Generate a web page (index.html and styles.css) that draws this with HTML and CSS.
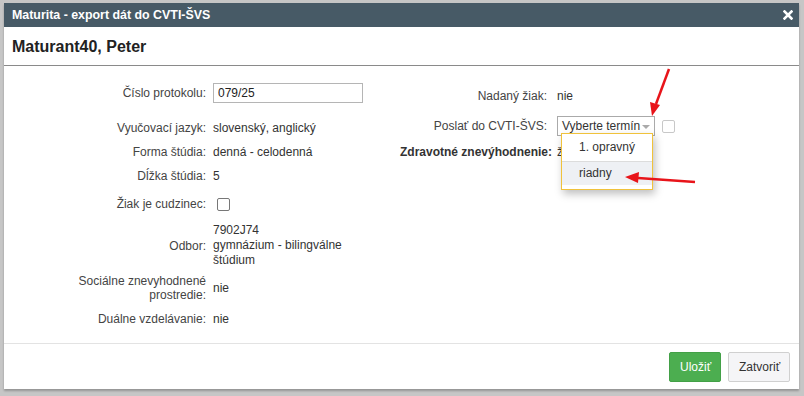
FILE: index.html
```html
<!DOCTYPE html>
<html lang="sk">
<head>
    <meta charset="UTF-8">
    <title>Maturita - export dát do CVTI-ŠVS</title>
    <link rel="stylesheet" href="styles.css">
</head>
<body>
    <div class="dialog">
        <div class="titlebar">
            <span class="title">Maturita - export dát do CVTI-ŠVS</span>
            <svg class="close" width="10" height="10" viewBox="0 0 10 10">
                <path d="M1.5 1.5 L8.5 8.5 M8.5 1.5 L1.5 8.5" stroke="#fff" stroke-width="2.6" stroke-linecap="square"/>
            </svg>
        </div>
        <div class="header">
            <h1>Maturant40, Peter</h1>
        </div>

        <div class="content">
            <div class="col col-left">
                <div class="row row-protocol">
                    <label>Číslo protokolu:</label>
                    <div class="value"><input type="text" class="text-input" value="079/25"></div>
                </div>
                <div class="row row-lang">
                    <label>Vyučovací jazyk:</label>
                    <div class="value">slovenský, anglický</div>
                </div>
                <div class="row row-form">
                    <label>Forma štúdia:</label>
                    <div class="value">denná - celodenná</div>
                </div>
                <div class="row row-length">
                    <label>Dĺžka štúdia:</label>
                    <div class="value">5</div>
                </div>
                <div class="row row-foreign">
                    <label>Žiak je cudzinec:</label>
                    <div class="value"><span class="checkbox"></span></div>
                </div>
                <div class="row row-field">
                    <label>Odbor:</label>
                    <div class="value multi">7902J74<br>gymnázium - bilingválne<br>štúdium</div>
                </div>
                <div class="row row-social">
                    <label>Sociálne znevyhodnené<br>prostredie:</label>
                    <div class="value">nie</div>
                </div>
                <div class="row row-dual">
                    <label>Duálne vzdelávanie:</label>
                    <div class="value">nie</div>
                </div>
            </div>

            <div class="col col-right">
                <div class="row row-gifted">
                    <label>Nadaný žiak:</label>
                    <div class="value">nie</div>
                </div>
                <div class="row row-send">
                    <label>Poslať do CVTI-ŠVS:</label>
                    <div class="value send-value">
                        <div class="select-wrap">
                            <div class="select">Vyberte termín<span class="caret"></span></div>
                            <ul class="dropdown">
                                <li>1. opravný</li>
                                <li class="active">riadny</li>
                            </ul>
                        </div>
                        <span class="checkbox disabled"></span>
                    </div>
                </div>
                <div class="row row-health">
                    <label class="strong">Zdravotné znevýhodnenie:</label>
                    <div class="value">žiadne</div>
                </div>
            </div>
        </div>

        <div class="footer">
            <button class="btn btn-save">Uložiť</button>
            <button class="btn btn-close">Zatvoriť</button>
        </div>
    </div>

    <!-- annotation arrows drawn over the screenshot -->
    <svg class="arrows" width="804" height="396" viewBox="0 0 804 396">
        <line x1="669" y1="69" x2="656" y2="104" stroke="#e8141a" stroke-width="2.5"/>
        <polygon points="652,116 650,102 660,105" fill="#e8141a"/>
        <line x1="695" y1="182" x2="638" y2="178" stroke="#e8141a" stroke-width="2.5"/>
        <polygon points="625,177 639,172 638,183" fill="#e8141a"/>
    </svg>
</body>
</html>
```

FILE: styles.css
```css
body {
    margin: 0;
    width: 804px;
    height: 396px;
    background-color: #c6c6c6;
    font-family: "Liberation Sans", Arial, sans-serif;
    font-size: 12px;
    color: #333;
    position: relative;
    overflow: hidden;
}
.dialog {
    position: relative;
    margin: 3px 0 0 4px;
    width: 795px;
    height: 386px;
    background: #fff;
    box-shadow: 0 2px 2px rgba(0, 0, 0, 0.25);
    display: flex;
    flex-direction: column;
}
.titlebar {
    height: 24px;
    background-color: #475a66;
    display: flex;
    align-items: center;
    justify-content: space-between;
    padding: 0 6px 0 8px;
}
.title {
    color: #fff;
    font-weight: bold;
    font-size: 12.4px;
}
.close {
    display: block;
}
.header {
    height: 38px;
    border-bottom: 1px solid #8a8a8a;
    display: flex;
    align-items: center;
    padding: 0 8px;
}
.header h1 {
    margin: 1px 0 0;
    font-size: 16px;
    font-weight: bold;
    color: #222;
}
.content {
    flex: 1;
    display: flex;
    padding: 17px 0 0 12px;
}
.col-left {
    flex: 0 0 384px;
}
.col-right {
    flex: 1;
    padding-top: 6px;
}
.row {
    display: grid;
    grid-template-columns: 190px 1fr;
    column-gap: 7px;
    align-items: center;
    line-height: 14px;
}
.col-right .row {
    grid-template-columns: 147px 1fr;
    column-gap: 10px;
}
.row label {
    text-align: right;
    color: #444;
    white-space: nowrap;
}
.row label.strong {
    font-weight: bold;
    color: #333;
}
.value.multi {
    line-height: 15px;
}
.row-lang { margin-top: 18px; }
.row-form, .row-length { margin-top: 10px; }
.row-foreign { margin-top: 14px; }
.row-field { margin-top: 12px; }
.row-social { margin-top: 6px; }
.row-dual { margin-top: 10px; }
.row-send { margin-top: 13px; }
.row-health { margin-top: 9px; }

.text-input {
    display: block;
    width: 150px;
    height: 20px;
    box-sizing: border-box;
    border: 1px solid #b5b5b5;
    padding: 0 4px;
    font-family: inherit;
    font-size: 12px;
    color: #222;
}
.checkbox {
    display: block;
    width: 13px;
    height: 13px;
    box-sizing: border-box;
    border: 1px solid #777;
    border-radius: 2px;
    margin-left: 4px;
    background: #fff;
}
.checkbox.disabled {
    border-color: #c8c8c8;
    margin-left: 7px;
}
.send-value {
    display: flex;
    align-items: center;
}
.select-wrap {
    position: relative;
}
.select {
    width: 98px;
    height: 20px;
    box-sizing: border-box;
    border: 1px solid #aaa;
    padding: 0 0 0 4px;
    font-size: 12px;
    line-height: 18px;
    color: #333;
    position: relative;
}
.caret {
    position: absolute;
    right: 4px;
    top: 8px;
    border-left: 4px solid transparent;
    border-right: 4px solid transparent;
    border-top: 4px solid #aaa;
}
.dropdown {
    position: absolute;
    left: 4px;
    top: 17px;
    width: 92px;
    margin: 0;
    padding: 0 0 4px;
    list-style: none;
    background: #fff;
    border: 1px solid #f0c23b;
    box-sizing: border-box;
    box-shadow: 2px 4px 8px rgba(0, 0, 0, 0.25);
    z-index: 2;
}
.dropdown li {
    height: 27px;
    line-height: 27px;
    padding-left: 17px;
    color: #333;
}
.dropdown li + li {
    border-top: 1px solid #dcdcdc;
    height: 23px;
    line-height: 22px;
}
.dropdown li.active {
    background-color: #eef0f4;
}
.footer {
    height: 46px;
    box-sizing: border-box;
    border-top: 1px solid #e3e3e3;
    display: flex;
    justify-content: flex-end;
    align-items: center;
    gap: 7px;
    padding: 0 9px 0 0;
}
.btn {
    height: 30px;
    border-radius: 2px;
    font-family: inherit;
    font-size: 12px;
    padding: 0 10px;
    cursor: pointer;
}
.btn-save {
    width: 52px;
    background-color: #4cae50;
    border: 1px solid #43a047;
    color: #fff;
}
.btn-close {
    width: 62px;
    background-color: #f5f5f7;
    border: 1px solid #d0d0d0;
    color: #333;
}
.arrows {
    position: absolute;
    left: 0;
    top: 0;
    z-index: 10;
    pointer-events: none;
}
```
